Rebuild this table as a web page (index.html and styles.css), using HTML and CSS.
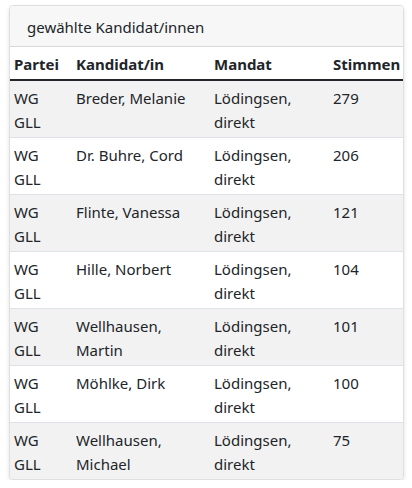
FILE: index.html
```html
<!DOCTYPE html>
<html lang="de">

<head>
    <meta charset="UTF-8">
    <meta name="viewport" content="width=device-width, initial-scale=1.0">
    <title>gewählte Kandidat/innen</title>
    <link rel="stylesheet" href="styles.css">
</head>

<body>
    <div class="card">
        <div class="card-header">gewählte Kandidat/innen</div>
        <table class="results">
            <colgroup>
                <col class="col-partei">
                <col class="col-name">
                <col class="col-mandat">
                <col class="col-stimmen">
            </colgroup>
            <thead>
                <tr>
                    <th>Partei</th>
                    <th>Kandidat/in</th>
                    <th>Mandat</th>
                    <th>Stimmen</th>
                </tr>
            </thead>
            <tbody>
                <tr>
                    <td>WG GLL</td>
                    <td>Breder, Melanie</td>
                    <td>Lödingsen, direkt</td>
                    <td>279</td>
                </tr>
                <tr>
                    <td>WG GLL</td>
                    <td>Dr. Buhre, Cord</td>
                    <td>Lödingsen, direkt</td>
                    <td>206</td>
                </tr>
                <tr>
                    <td>WG GLL</td>
                    <td>Flinte, Vanessa</td>
                    <td>Lödingsen, direkt</td>
                    <td>121</td>
                </tr>
                <tr>
                    <td>WG GLL</td>
                    <td>Hille, Norbert</td>
                    <td>Lödingsen, direkt</td>
                    <td>104</td>
                </tr>
                <tr>
                    <td>WG GLL</td>
                    <td>Wellhausen, Martin</td>
                    <td>Lödingsen, direkt</td>
                    <td>101</td>
                </tr>
                <tr>
                    <td>WG GLL</td>
                    <td>Möhlke, Dirk</td>
                    <td>Lödingsen, direkt</td>
                    <td>100</td>
                </tr>
                <tr>
                    <td>WG GLL</td>
                    <td>Wellhausen, Michael</td>
                    <td>Lödingsen, direkt</td>
                    <td>75</td>
                </tr>
            </tbody>
        </table>
    </div>
</body>

</html>
```

FILE: styles.css
```css
* {
    box-sizing: border-box;
}

body {
    margin: 0;
    padding: 5px 8px 0 9px;
    background: #fff;
    color: #212529;
    font-family: "Noto Sans", Lato, sans-serif;
    font-size: 15px;
    line-height: 24px;
}

.card {
    width: 395px;
    border: 1px solid rgba(0, 0, 0, .125);
    border-radius: 4px;
    overflow: hidden;
    box-shadow: 0 2px 4px rgba(0, 0, 0, .12);
}

.card-header {
    padding: 9px 17px 7px 17px;
    background-color: #f7f7f7;
    border-bottom: 1px solid rgba(0, 0, 0, .125);
}

.results {
    width: 100%;
    border-collapse: collapse;
    table-layout: fixed;
}

.col-partei {
    width: 62px;
}

.col-name {
    width: 138px;
}

.col-mandat {
    width: 119px;
}

.results th,
.results td {
    padding: 5px 4px 3px;
    text-align: left;
    vertical-align: top;
}

.results th {
    font-weight: 700;
    border-bottom: 2px solid #212529;
}

.results td {
    border-top: 1px solid #dee2e6;
}

.results tbody tr:first-child td {
    border-top: 0;
}

.results tbody tr:nth-child(odd) {
    background-color: #f2f2f2;
}
```
